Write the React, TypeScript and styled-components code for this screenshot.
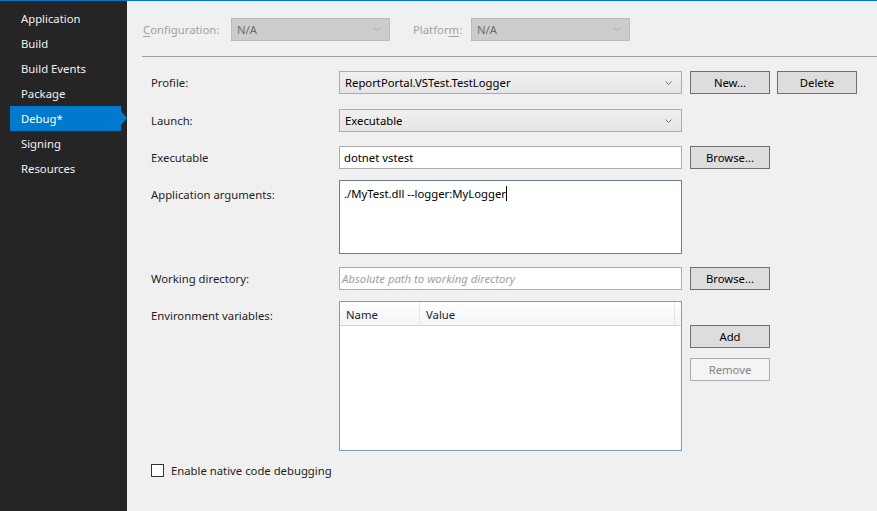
import React from "react";
import styled, { createGlobalStyle, css } from "styled-components";

const GlobalStyle = createGlobalStyle`
  html, body { margin: 0; padding: 0; }
  body {
    width: 877px;
    height: 511px;
    overflow: hidden;
    font-family: "Noto Sans", "Open Sans", sans-serif;
    font-size: 11.3px;
    color: #1e1e1e;
  }
  #root { height: 100%; }
`;

const Window = styled.div`
  display: flex;
  flex-direction: column;
  width: 877px;
  height: 511px;
`;

const AccentLine = styled.div`
  height: 1px;
  background: #007acc;
  flex: none;
`;

const Body = styled.div`
  display: flex;
  flex: 1;
  min-height: 0;
`;

const Sidebar = styled.nav`
  width: 127px;
  flex: none;
  background: #252526;
  padding-top: 5px;
  box-sizing: border-box;
  display: flex;
  flex-direction: column;
`;

const NavItem = styled.div<{ $active?: boolean }>`
  position: relative;
  height: 25px;
  margin: 0 6px 0 10px;
  padding-left: 11px;
  display: flex;
  align-items: center;
  color: #f1f1f1;
  line-height: 15px;
  ${(p) =>
    p.$active &&
    css`
      background: #007acc;
      color: #ffffff;
      &::after {
        content: "";
        position: absolute;
        right: -6px;
        top: 5px;
        border-top: 7px solid transparent;
        border-bottom: 7px solid transparent;
        border-left: 6px solid #007acc;
      }
    `}
`;

const Main = styled.main`
  flex: 1;
  background: #f0f0f0;
  display: flex;
  flex-direction: column;
`;

const Header = styled.div`
  display: flex;
  align-items: center;
  height: 56px;
  padding-top: 1px;
  box-sizing: border-box;
  border-bottom: 1px solid #a0a0a0;
  margin-left: 15px;
  padding-left: 1px;
`;

const HeaderLabel = styled.span<{ $width: number; $ml?: number }>`
  color: #a0a0a0;
  width: ${(p) => p.$width}px;
  margin-left: ${(p) => p.$ml ?? 0}px;
  flex: none;
  line-height: 15px;
  u { text-decoration: underline; text-underline-offset: 2px; }
`;

const Combo = styled.div<{ $disabled?: boolean; $width: number }>`
  width: ${(p) => p.$width}px;
  height: 23px;
  box-sizing: border-box;
  display: flex;
  align-items: center;
  justify-content: space-between;
  padding: 0 9px 0 5px;
  border: 1px solid ${(p) => (p.$disabled ? "#bcbcbc" : "#acacac")};
  background: ${(p) => (p.$disabled ? "#cccccc" : "linear-gradient(#f0f0f0, #e5e5e5)")};
  color: ${(p) => (p.$disabled ? "#6d6d6d" : "#000000")};
  line-height: 15px;
  flex: none;
`;

const Chevron = ({ color }: { color: string }) => (
  <svg width="7" height="4" viewBox="0 0 7 4">
    <path d="M0.5 0.5 L3.5 3.5 L6.5 0.5" fill="none" stroke={color} strokeWidth="1" />
  </svg>
);

const Form = styled.div`
  display: flex;
  flex-direction: column;
  padding: 14px 0 0 24px;
`;

const Row = styled.div<{ $mt?: number }>`
  display: flex;
  align-items: flex-start;
  margin-top: ${(p) => p.$mt ?? 0}px;
`;

const Label = styled.div<{ $tall?: boolean }>`
  width: 188px;
  flex: none;
  line-height: 15px;
  padding-top: ${(p) => (p.$tall ? 7 : 4)}px;
  color: #1e1e1e;
`;

const TextBox = styled.div<{ $focused?: boolean; $height?: number }>`
  width: 343px;
  height: ${(p) => p.$height ?? 23}px;
  box-sizing: border-box;
  flex: none;
  background: #ffffff;
  border: 1px solid ${(p) => (p.$focused ? "#6c7e93" : "#ababab")};
  padding: ${(p) => (p.$height ? "5px 4px" : "0 4px")};
  display: flex;
  align-items: ${(p) => (p.$height ? "flex-start" : "center")};
  line-height: 15px;
  color: #000;
`;

const Placeholder = styled.span`
  color: #a0a0a0;
  font-style: italic;
  margin-left: -2px;
`;

const Caret = styled.span`
  display: inline-block;
  width: 1px;
  height: 15px;
  background: #000;
  vertical-align: top;
`;

const Button = styled.div<{ $disabled?: boolean; $ml?: number }>`
  width: 80px;
  height: 23px;
  box-sizing: border-box;
  flex: none;
  margin-left: ${(p) => p.$ml ?? 8}px;
  display: flex;
  align-items: center;
  justify-content: center;
  line-height: 15px;
  background: ${(p) => (p.$disabled ? "#f4f4f4" : "#dddddd")};
  border: 1px solid ${(p) => (p.$disabled ? "#adadad" : "#707070")};
  color: ${(p) => (p.$disabled ? "#838383" : "#000000")};
`;

const ButtonColumn = styled.div`
  display: flex;
  flex-direction: column;
  gap: 10px;
  padding-top: 24px;
`;

const ListView = styled.div`
  width: 343px;
  height: 150px;
  box-sizing: border-box;
  flex: none;
  background: #ffffff;
  border: 1px solid #7f9db9;
  display: flex;
  flex-direction: column;
`;

const ListHeader = styled.div`
  display: flex;
  height: 24px;
  box-sizing: border-box;
  background: linear-gradient(#ffffff, #f3f4f6);
  border-bottom: 1px solid #d5d5d5;
`;

const ColumnHead = styled.div<{ $width?: number }>`
  ${(p) => (p.$width ? `width: ${p.$width}px;` : "flex: 1;")}
  flex-shrink: 0;
  box-sizing: border-box;
  padding: 2px 0 0 6px;
  display: flex;
  align-items: center;
  border-right: 1px solid #e5e5e5;
  line-height: 15px;
  color: #1e1e1e;
`;

const ColumnFiller = styled.div`
  width: 6px;
  flex: none;
`;

const CheckRow = styled.label`
  display: flex;
  align-items: center;
  gap: 7px;
  margin-top: 12px;
  line-height: 15px;
  color: #1e1e1e;
`;

const CheckBox = styled.span`
  width: 13px;
  height: 13px;
  box-sizing: border-box;
  border: 1px solid #333333;
  background: #ffffff;
  flex: none;
`;

const navItems = ["Application", "Build", "Build Events", "Package", "Debug*", "Signing", "Resources"];

export default function App() {
  return (
    <>
      <GlobalStyle />
      <Window>
        <AccentLine />
        <Body>
          <Sidebar>
            {navItems.map((item) => (
              <NavItem key={item} $active={item === "Debug*"}>
                {item}
              </NavItem>
            ))}
          </Sidebar>
          <Main>
            <Header>
              <HeaderLabel $width={88}>
                <u>C</u>onfiguration:
              </HeaderLabel>
              <Combo $disabled $width={159}>
                <span>N/A</span>
                <Chevron color="#a8a8a8" />
              </Combo>
              <HeaderLabel $width={58} $ml={23}>
                Platfor<u>m</u>:
              </HeaderLabel>
              <Combo $disabled $width={159}>
                <span>N/A</span>
                <Chevron color="#a8a8a8" />
              </Combo>
            </Header>
            <Form>
              <Row>
                <Label>Profile:</Label>
                <Combo $width={343}>
                  <span>ReportPortal.VSTest.TestLogger</span>
                  <Chevron color="#707070" />
                </Combo>
                <Button>New...</Button>
                <Button $ml={7}>Delete</Button>
              </Row>
              <Row $mt={15}>
                <Label>Launch:</Label>
                <Combo $width={343}>
                  <span>Executable</span>
                  <Chevron color="#707070" />
                </Combo>
              </Row>
              <Row $mt={14}>
                <Label>Executable</Label>
                <TextBox>dotnet vstest</TextBox>
                <Button>Browse...</Button>
              </Row>
              <Row $mt={11}>
                <Label $tall>Application arguments:</Label>
                <TextBox $focused $height={74}>
                  <span>
                    ./MyTest.dll --logger:MyLogger
                    <Caret />
                  </span>
                </TextBox>
              </Row>
              <Row $mt={13}>
                <Label>Working directory:</Label>
                <TextBox>
                  <Placeholder>Absolute path to working directory</Placeholder>
                </TextBox>
                <Button>Browse...</Button>
              </Row>
              <Row $mt={11}>
                <Label $tall>Environment variables:</Label>
                <ListView>
                  <ListHeader>
                    <ColumnHead $width={80}>Name</ColumnHead>
                    <ColumnHead>Value</ColumnHead>
                    <ColumnFiller />
                  </ListHeader>
                </ListView>
                <ButtonColumn>
                  <Button>Add</Button>
                  <Button $disabled>Remove</Button>
                </ButtonColumn>
              </Row>
              <CheckRow>
                <CheckBox />
                Enable native code debugging
              </CheckRow>
            </Form>
          </Main>
        </Body>
      </Window>
    </>
  );
}
